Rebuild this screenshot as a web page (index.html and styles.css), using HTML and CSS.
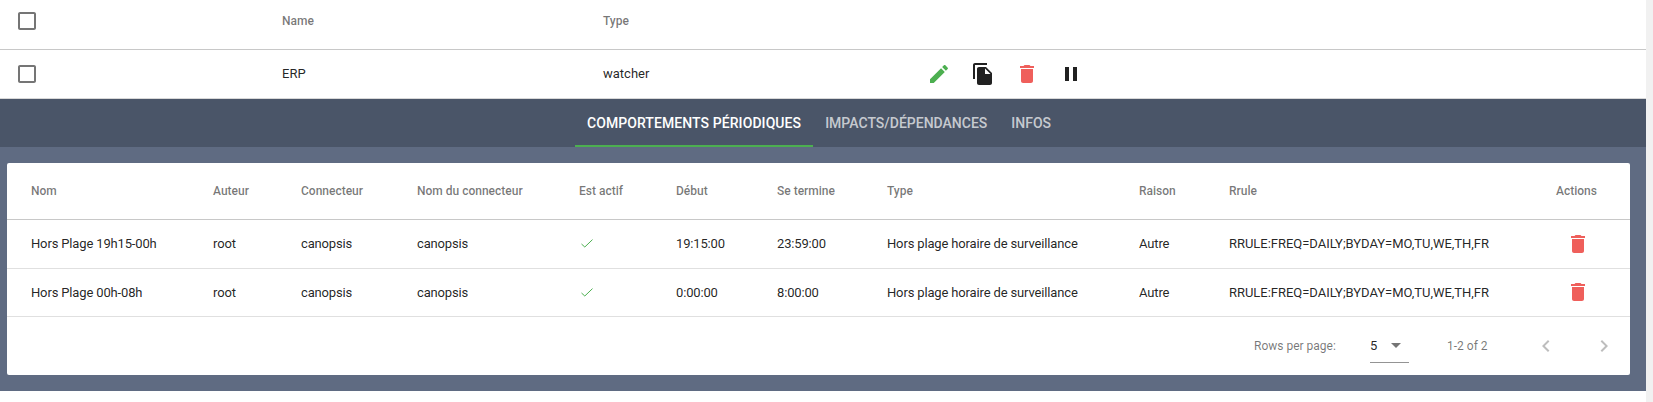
FILE: index.html
```html
<!DOCTYPE html>
<html>
    <head>
        <title>Watchers</title>
        <link rel="stylesheet" href="styles.css">
    </head>
    <body>
        <div class="page">
            <main class="main">
                <div class="entity-row entity-head">
                    <span class="check-cell"><svg class="icon check-box" viewBox="0 0 24 24"><path d="M19 5v14H5V5h14m0-2H5c-1.1 0-2 .9-2 2v14c0 1.1.9 2 2 2h14c1.1 0 2-.9 2-2V5c0-1.1-.9-2-2-2z"/></svg></span>
                    <span>Name</span>
                    <span>Type</span>
                </div>
                <div class="entity-row entity-item">
                    <span class="check-cell"><svg class="icon check-box" viewBox="0 0 24 24"><path d="M19 5v14H5V5h14m0-2H5c-1.1 0-2 .9-2 2v14c0 1.1.9 2 2 2h14c1.1 0 2-.9 2-2V5c0-1.1-.9-2-2-2z"/></svg></span>
                    <span class="entity-text">ERP</span>
                    <span class="entity-text">watcher</span>
                    <span class="entity-actions">
                        <button class="icon-btn green"><svg class="icon" viewBox="0 0 24 24"><path d="M3 17.25V21h3.75L17.81 9.94l-3.75-3.75L3 17.25zM20.71 7.04c.39-.39.39-1.02 0-1.41l-2.34-2.34c-.39-.39-1.02-.39-1.41 0l-1.83 1.83 3.75 3.75 1.83-1.83z"/></svg></button>
                        <button class="icon-btn dark"><svg class="icon" viewBox="0 0 24 24"><path d="M16 1H4c-1.1 0-2 .9-2 2v14h2V3h12V1zm-1 4l6 6v10c0 1.1-.9 2-2 2H7.99C6.89 23 6 22.1 6 21l.01-14c0-1.1.89-2 1.99-2h7zm-1 7h5.5L14 6.5V12z"/></svg></button>
                        <button class="icon-btn red"><svg class="icon" viewBox="0 0 24 24"><path d="M6 19c0 1.1.9 2 2 2h8c1.1 0 2-.9 2-2V7H6v12zM19 4h-3.5l-1-1h-5l-1 1H5v2h14V4z"/></svg></button>
                        <button class="icon-btn dark"><svg class="icon" viewBox="0 0 24 24"><path d="M6 19h4V5H6v14zm8-14v14h4V5h-4z"/></svg></button>
                    </span>
                </div>

                <nav class="tabs">
                    <a class="tab active">Comportements périodiques</a>
                    <a class="tab">Impacts/Dépendances</a>
                    <a class="tab">Infos</a>
                </nav>

                <section class="panel">
                    <div class="card">
                        <table class="pbh-table">
                            <colgroup>
                                <col class="c-name"><col class="c-author"><col class="c-conn"><col class="c-connname"><col class="c-active"><col class="c-start"><col class="c-end"><col class="c-type"><col class="c-reason"><col class="c-rrule"><col class="c-actions">
                            </colgroup>
                            <thead>
                                <tr>
                                    <th>Nom</th><th>Auteur</th><th>Connecteur</th><th>Nom du connecteur</th><th>Est actif</th><th>Début</th><th>Se termine</th><th>Type</th><th>Raison</th><th>Rrule</th><th class="actions-head">Actions</th>
                                </tr>
                            </thead>
                            <tbody>
                                <tr>
                                    <td>Hors Plage 19h15-00h</td><td>root</td><td>canopsis</td><td>canopsis</td>
                                    <td><svg class="tick" viewBox="0 0 12 9"><path d="M.5 5 3.8 8 11.5.6"/></svg></td>
                                    <td>19:15:00</td><td>23:59:00</td><td>Hors plage horaire de surveillance</td><td>Autre</td><td class="rrule">RRULE:FREQ=DAILY;BYDAY=MO,TU,WE,TH,FR</td>
                                    <td class="actions-cell"><svg class="icon red" viewBox="0 0 24 24"><path d="M6 19c0 1.1.9 2 2 2h8c1.1 0 2-.9 2-2V7H6v12zM19 4h-3.5l-1-1h-5l-1 1H5v2h14V4z"/></svg></td>
                                </tr>
                                <tr>
                                    <td>Hors Plage 00h-08h</td><td>root</td><td>canopsis</td><td>canopsis</td>
                                    <td><svg class="tick" viewBox="0 0 12 9"><path d="M.5 5 3.8 8 11.5.6"/></svg></td>
                                    <td>0:00:00</td><td>8:00:00</td><td>Hors plage horaire de surveillance</td><td>Autre</td><td class="rrule">RRULE:FREQ=DAILY;BYDAY=MO,TU,WE,TH,FR</td>
                                    <td class="actions-cell"><svg class="icon red" viewBox="0 0 24 24"><path d="M6 19c0 1.1.9 2 2 2h8c1.1 0 2-.9 2-2V7H6v12zM19 4h-3.5l-1-1h-5l-1 1H5v2h14V4z"/></svg></td>
                                </tr>
                            </tbody>
                        </table>
                        <div class="pager">
                            <span class="pager-label">Rows per page:</span>
                            <span class="pager-select">
                                <span>5</span>
                                <svg class="pager-caret" viewBox="0 0 10 5"><path d="M0 0h10L5 5z"/></svg>
                            </span>
                            <span class="pager-count">1-2 of 2</span>
                            <span class="pager-nav">
                                <svg class="icon muted" viewBox="0 0 24 24"><path d="M15.41 7.41L14 6l-6 6 6 6 1.41-1.41L10.83 12z"/></svg>
                                <svg class="icon muted" viewBox="0 0 24 24"><path d="M10 6L8.59 7.41 13.17 12l-4.58 4.59L10 18l6-6z"/></svg>
                            </span>
                        </div>
                    </div>
                </section>
            </main>
            <div class="scroll-track"></div>
        </div>
    </body>
</html>
```

FILE: styles.css
```css
* {
	box-sizing: border-box;
}

body {
	margin: 0;
	height: 402px;
	overflow: hidden;
	background-color: #fff;
	color: rgba(0, 0, 0, 0.87);
	font-family: Roboto, "Liberation Sans", sans-serif;
	font-size: 13px;
}

.page {
	display: flex;
	height: 100%;
}

.main {
	flex: 1;
	min-width: 0;
}

.scroll-track {
	width: 7px;
	background-color: #f1f1f1;
}

.icon {
	display: block;
	width: 24px;
	height: 24px;
	fill: currentColor;
}

.green {
	color: #4caf50;
}

.red {
	color: #ef5f5b;
}

.dark {
	color: #212121;
}

.muted {
	color: rgba(0, 0, 0, 0.26);
}

.entity-row {
	display: grid;
	grid-template-columns: 282px 321px 318px 1fr;
	align-items: center;
}

.entity-head {
	height: 50px;
	padding-bottom: 7px;
	border-bottom: 1px solid #c8c8c8;
	color: rgba(0, 0, 0, 0.54);
	font-size: 12px;
	font-weight: 500;
}

.entity-item {
	height: 49px;
	border-bottom: 1px solid #d8d8d8;
}

.entity-text {
	padding-bottom: 1px;
}

.check-cell {
	padding-left: 15px;
}

.check-box {
	color: #757575;
}

.entity-actions {
	display: flex;
}

.icon-btn {
	display: flex;
	align-items: center;
	justify-content: center;
	width: 36px;
	height: 36px;
	margin-right: 8px;
	padding: 0;
	border: 0;
	background: none;
}

.tabs {
	display: flex;
	justify-content: center;
	height: 48px;
	padding-right: 8px;
	background-color: #4a5568;
}

.tab {
	display: flex;
	align-items: center;
	padding: 2px 12px 0;
	border-bottom: 2px solid transparent;
	color: rgba(255, 255, 255, 0.7);
	font-size: 14px;
	font-weight: 500;
	text-transform: uppercase;
}

.tab.active {
	border-bottom-color: #4caf50;
	color: #fff;
	letter-spacing: 0.08px;
}

.panel {
	padding: 16px 16px 16px 7px;
	background-color: #5f6b82;
}

.card {
	border-radius: 2px;
	background-color: #fff;
}

.pbh-table {
	width: 100%;
	border-collapse: collapse;
	table-layout: fixed;
}

.c-name { width: 206px; }
.c-author { width: 88px; }
.c-conn { width: 116px; }
.c-connname { width: 162px; }
.c-active { width: 97px; }
.c-start { width: 101px; }
.c-end { width: 110px; }
.c-type { width: 252px; }
.c-reason { width: 90px; }
.c-rrule { width: 298px; }

.pbh-table th {
	height: 56px;
	padding: 0;
	border-bottom: 1px solid #c8c8c8;
	color: rgba(0, 0, 0, 0.54);
	font-size: 12px;
	font-weight: 500;
	text-align: left;
}

.pbh-table td {
	height: 48px;
	padding: 0;
	border-bottom: 1px solid #e0e0e0;
	letter-spacing: -0.15px;
	white-space: nowrap;
}

.pbh-table tbody tr:first-child td {
	height: 49px;
}

.pbh-table td.rrule {
	letter-spacing: -0.03px;
}

.pbh-table th:first-child,
.pbh-table td:first-child {
	padding-left: 24px;
}

.pbh-table th.actions-head {
	padding-right: 4px;
	text-align: center;
}

.pbh-table td.actions-cell {
	padding-right: 2px;
}

.actions-cell .icon {
	margin: 0 auto;
}

.tick {
	display: block;
	width: 12px;
	height: 9px;
	margin-left: 2px;
	fill: none;
	stroke: #4caf50;
	stroke-width: 1;
}

.pager {
	display: flex;
	align-items: center;
	height: 58px;
	padding-left: 1247px;
	color: rgba(0, 0, 0, 0.54);
	font-size: 12px;
}

.pager-label {
	width: 116px;
}

.pager-select {
	display: flex;
	align-items: center;
	width: 39px;
	height: 34px;
	margin-top: 1px;
	border-bottom: 1px solid rgba(0, 0, 0, 0.42);
	color: rgba(0, 0, 0, 0.87);
	font-size: 13px;
}

.pager-caret {
	width: 10px;
	height: 5px;
	margin-left: 14px;
	fill: rgba(0, 0, 0, 0.54);
}

.pager-count {
	margin-left: 38px;
	width: 87px;
}

.pager-nav {
	display: flex;
	gap: 34px;
}
```
